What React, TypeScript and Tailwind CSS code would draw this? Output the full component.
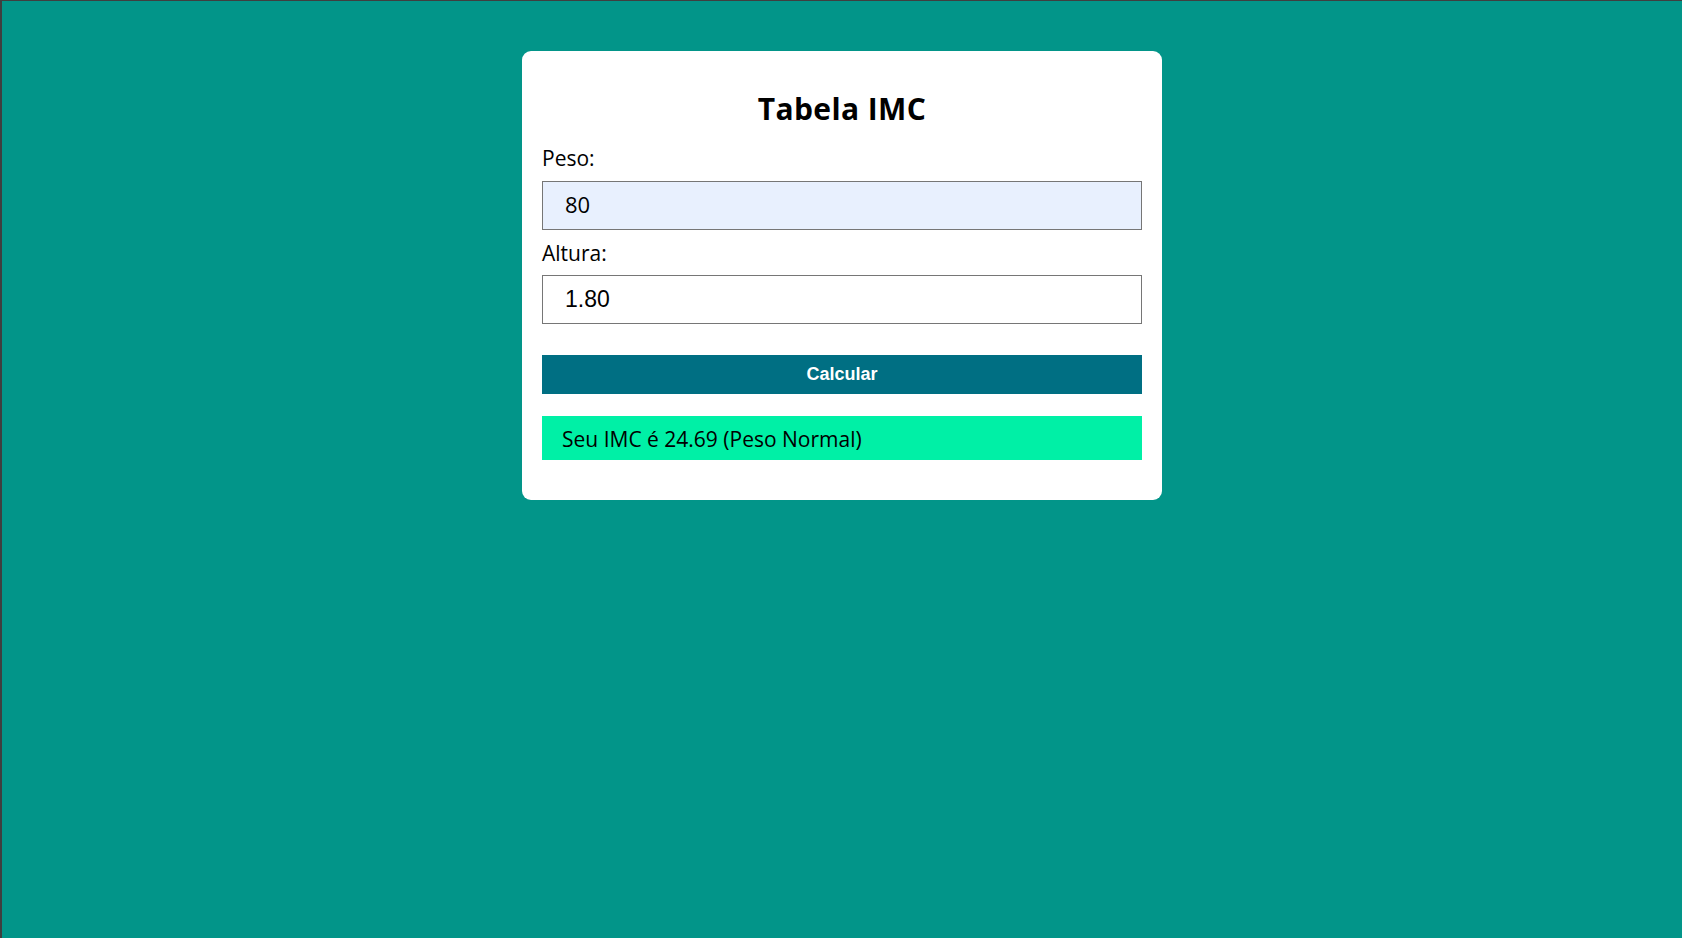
export default function App() {
  return (
    <div className="min-h-screen border-l-2 border-t border-[#3f3f3f] bg-[#029589] font-['Open_Sans',sans-serif] text-black">
      <div className="mx-auto mt-[50px] w-[640px] rounded-[9px] bg-white px-5 pb-[40px] pt-[39px]">
        <h1 className="text-center text-[30px] font-bold leading-[38px] tracking-[0.4px]">Tabela IMC</h1>

        <label className="mt-[17px] block text-[21px] leading-[27px]">Peso:</label>
        <input
          defaultValue="80"
          className="mt-[9px] block h-[49px] w-full border border-[#767676] bg-[#e8f0fe] pb-[3px] pl-[22px] text-[22px] outline-none"
        />

        <label className="mt-[10px] block text-[21px] leading-[27px]">Altura:</label>
        <input
          defaultValue="1.80"
          className="mt-[8px] block h-[49px] w-full border border-[#767676] bg-white pl-[22px] font-['Liberation_Sans',Arial,sans-serif] text-[23px] outline-none"
        />

        <button className="mt-[31px] flex h-[39px] w-full items-center justify-center bg-[#006f83] font-['Liberation_Sans',Arial,sans-serif] text-[18px] font-bold text-white">
          Calcular
        </button>

        <div className="mt-[22px] flex h-[44px] items-center bg-[#00f0a6] pl-5 pt-[3px] text-[21px]">
          Seu IMC é 24.69 (Peso Normal)
        </div>
      </div>
    </div>
  );
}
